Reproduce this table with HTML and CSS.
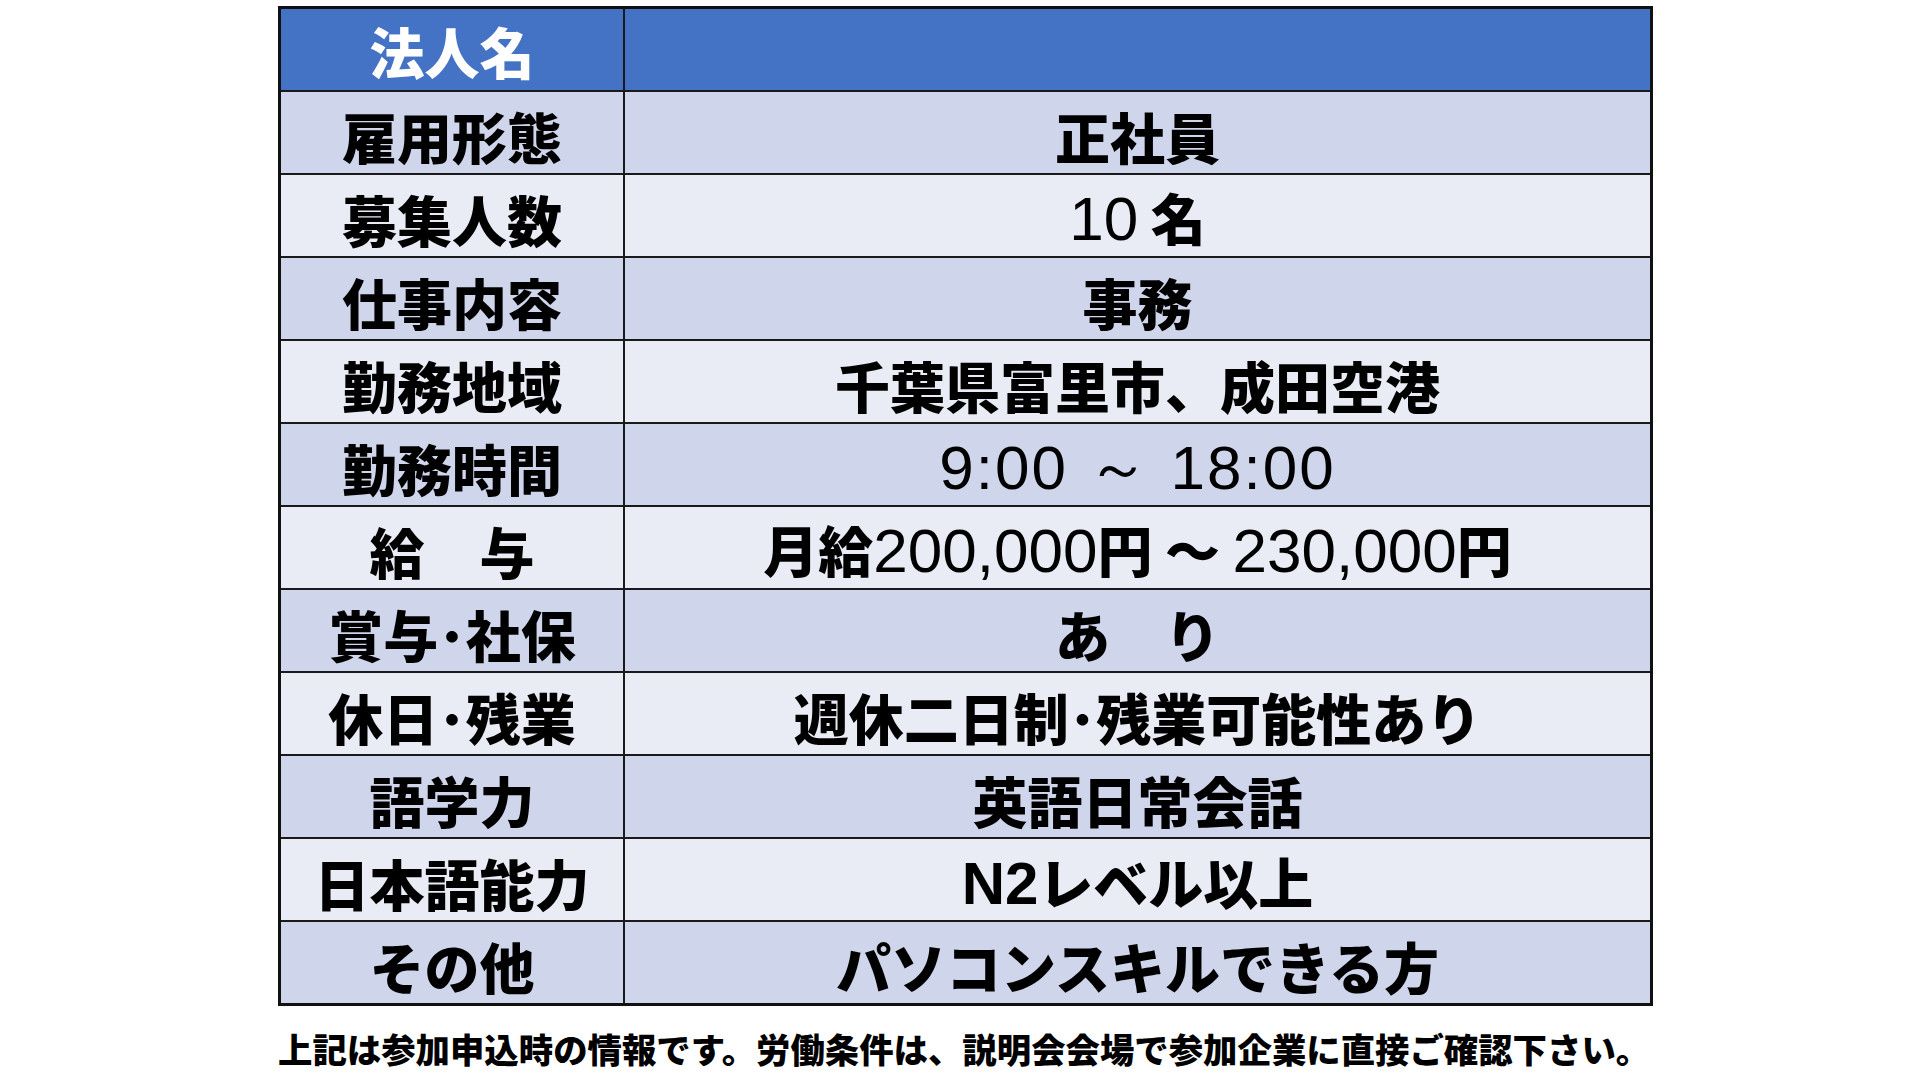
FILE: index.html
```html
<!DOCTYPE html>
<html lang="ja">
<head>
<meta charset="utf-8">
<title>求人情報</title>
<link rel="stylesheet" href="styles.css">
</head>
<body>
<main class="sheet">
  <table class="job">
    <tbody>
      <tr class="head"><th>法人名</th><td></td></tr>
      <tr class="band1"><th>雇用形態</th><td>正社員</td></tr>
      <tr class="band2"><th>募集人数</th><td><span class="num">10</span> 名</td></tr>
      <tr class="band1"><th>仕事内容</th><td>事務</td></tr>
      <tr class="band2"><th>勤務地域</th><td>千葉県富里市、成田空港</td></tr>
      <tr class="band1"><th>勤務時間</th><td><span class="num time">9:00 ～ 18:00</span></td></tr>
      <tr class="band2"><th>給　与</th><td>月給<span class="num">200,000</span>円 ～ <span class="num">230,000</span>円</td></tr>
      <tr class="band1"><th>賞与･社保</th><td>あ　り</td></tr>
      <tr class="band2"><th>休日･残業</th><td>週休二日制･残業可能性あり</td></tr>
      <tr class="band1"><th>語学力</th><td>英語日常会話</td></tr>
      <tr class="band2"><th>日本語能力</th><td><span class="latin">N2</span>レベル以上</td></tr>
      <tr class="band1"><th>その他</th><td>パソコンスキルできる方</td></tr>
    </tbody>
  </table>
  <p class="note">上記は参加申込時の情報です。労働条件は、説明会会場で参加企業に直接ご確認下さい。</p>
</main>
</body>
</html>
```
FILE: styles.css
```css
html, body {
  margin: 0;
  padding: 0;
  background: #ffffff;
}

body {
  font-family: "Noto Sans CJK JP", "Liberation Sans", sans-serif;
  color: #000000;
}

.sheet {
  padding: 6px 0 0 278px;
}

.job {
  border-collapse: collapse;
  width: 1375px;
  border: 3px solid #111111;
  table-layout: fixed;
}

.job th,
.job td {
  border: 2px solid #1a1a1a;
  height: 77px;
  padding: 4px 0 0 0;
  text-align: center;
  vertical-align: middle;
  font-size: 55px;
  font-weight: 900;
  line-height: 60px;
  white-space: nowrap;
}

.job th {
  width: 342px;
}

.head th,
.head td {
  background: #4472c4;
  color: #ffffff;
}

.head th {
  padding-top: 0;
}

.band1 th,
.band1 td {
  background: #cfd5ea;
}

.band2 th,
.band2 td {
  background: #e9ebf5;
}

.num {
  font-family: "Liberation Sans Narrow", "Liberation Sans", sans-serif;
  font-weight: 400;
  font-size: 62px;
}

.time {
  letter-spacing: 2px;
}

.latin {
  font-family: "Liberation Sans Narrow", "Liberation Sans", sans-serif;
  font-weight: 700;
  font-size: 60px;
}

.note {
  margin: 22px 0 0 0;
  font-size: 34.4px;
  font-weight: 900;
  line-height: 40px;
  white-space: nowrap;
}
```
